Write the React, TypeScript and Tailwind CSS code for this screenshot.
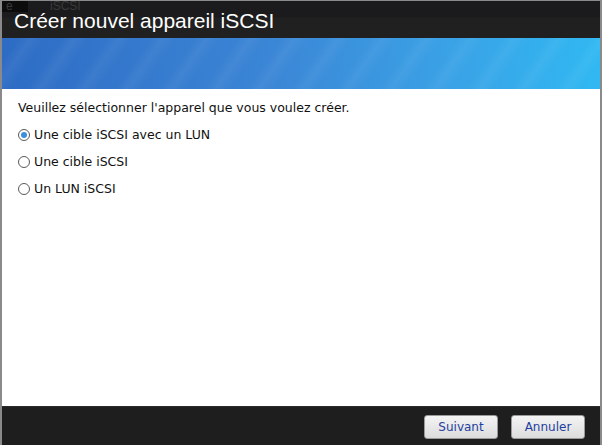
export default function App() {
  const options = ["Une cible iSCSI avec un LUN", "Une cible iSCSI", "Un LUN iSCSI"];
  return (
    <div className="w-[602px] h-[445px] bg-[#8a8a8a] pt-px pl-[2px] pr-[2px] overflow-hidden">
      <div className="flex flex-col h-full bg-white" style={{ fontFamily: "'Liberation Sans', Arial, sans-serif" }}>
        {/* title bar */}
        <div className="relative h-[37px] shrink-0 bg-[linear-gradient(to_bottom,#1b1b1d_0px,#1b1b1d_16px,#202020_17px,#202020_100%)]">
          <div className="absolute left-0 top-0 h-[11px] w-[26px] bg-[#0c0c0c] text-[#3a3a3a] text-[12px] leading-[10px] pl-[4px]">e</div>
          <div className="absolute left-[48px] top-0 text-[#3a3a3a] text-[12px] leading-[10px]">iSCSI</div>
          <div className="absolute left-[12px] top-[11px] text-white text-[21px] leading-[18px]">Créer nouvel appareil iSCSI</div>
        </div>
        {/* banner */}
        <div className="h-[51px] shrink-0 bg-[repeating-linear-gradient(125deg,rgba(255,255,255,0)_0px,rgba(255,255,255,0)_14px,rgba(255,255,255,0.05)_24px,rgba(255,255,255,0)_36px),linear-gradient(to_right,#2e6cc4,#3b86d6_45%,#3aa2e6_75%,#30b8f2)]" />
        {/* content */}
        <div className="flex-1 px-[16px] pt-[11px] text-[12.5px] text-[#111]" style={{ fontFamily: "'DejaVu Sans', Verdana, sans-serif" }}>
          <div className="leading-[16px]">Veuillez sélectionner l'apparel que vous voulez créer.</div>
          <div className="mt-[11px] flex flex-col gap-[11px]">
            {options.map((o, i) => (
              <div key={o} className="flex items-center gap-[4px] h-[16px]">
                <span className="w-[12px] h-[12px] rounded-full border border-[#5a5a5a] bg-white flex items-center justify-center">
                  {i === 0 && <span className="w-[6px] h-[6px] rounded-full bg-[#3b8fe0]" />}
                </span>
                <span>{o}</span>
              </div>
            ))}
          </div>
        </div>
        {/* footer */}
        <div className="h-[39px] shrink-0 bg-[#1e1e1e] border-t border-[#2a2a2a] flex items-center justify-end gap-[13px] pr-[15px] pt-[2px]">
          <button className="w-[74px] h-[24px] rounded-[3px] border border-[#9a9a9a] bg-[linear-gradient(to_bottom,#f4f4f4,#dcdcdc)] text-[12px] text-[#1f3fa0]" style={{ fontFamily: "'DejaVu Sans', Verdana, sans-serif" }}>Suivant</button>
          <button className="w-[74px] h-[24px] rounded-[3px] border border-[#9a9a9a] bg-[linear-gradient(to_bottom,#f4f4f4,#dcdcdc)] text-[12px] text-[#1f3fa0]" style={{ fontFamily: "'DejaVu Sans', Verdana, sans-serif" }}>Annuler</button>
        </div>
      </div>
    </div>
  );
}
